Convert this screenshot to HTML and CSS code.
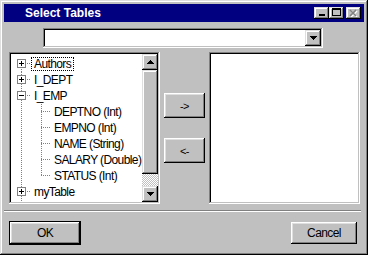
FILE: index.html
```html
<!DOCTYPE html>
<html lang="en">
<head>
    <meta charset="UTF-8">
    <title>Select Tables</title>
    <link rel="stylesheet" href="styles.css">
</head>
<body>
    <div class="window">
        <div class="title-bar">
            <span class="title">Select Tables</span>
            <div class="caption-buttons">
                <button class="cap-btn min"><span></span></button>
                <button class="cap-btn max"><span></span></button>
                <button class="cap-btn close" disabled>
                    <svg width="9" height="8" viewBox="0 0 9 8">
                        <path d="M1 1l6 6M7 1l-6 6" stroke="#fff" stroke-width="1.6" transform="translate(1 1)"/>
                        <path d="M1 1l6 6M7 1l-6 6" stroke="#808080" stroke-width="1.6"/>
                    </svg>
                </button>
            </div>
        </div>

        <div class="combo">
            <div class="combo-btn">
                <svg width="7" height="4" viewBox="0 0 7 4"><path d="M0 0h7v1h-1v1h-1v1h-1v1h-1v-1h-1v-1h-1v-1h-1z"/></svg>
            </div>
        </div>

        <div class="main">
            <div class="tree">
                <div class="tree-rows">
                    <div class="node">
                        <span class="gutter first"><span class="expander plus"></span></span>
                        <span class="label focused">Authors</span>
                    </div>
                    <div class="node">
                        <span class="gutter tee"><span class="expander plus"></span></span>
                        <span class="label">I_DEPT</span>
                    </div>
                    <div class="node">
                        <span class="gutter tee"><span class="expander minus"></span></span>
                        <span class="label">I_EMP</span>
                    </div>
                    <div class="node">
                        <span class="gutter pass"></span>
                        <span class="gutter tee"></span>
                        <span class="label">DEPTNO (Int)</span>
                    </div>
                    <div class="node">
                        <span class="gutter pass"></span>
                        <span class="gutter tee"></span>
                        <span class="label">EMPNO (Int)</span>
                    </div>
                    <div class="node">
                        <span class="gutter pass"></span>
                        <span class="gutter tee"></span>
                        <span class="label">NAME (String)</span>
                    </div>
                    <div class="node">
                        <span class="gutter pass"></span>
                        <span class="gutter tee"></span>
                        <span class="label">SALARY (Double)</span>
                    </div>
                    <div class="node">
                        <span class="gutter pass"></span>
                        <span class="gutter end"></span>
                        <span class="label">STATUS (Int)</span>
                    </div>
                    <div class="node">
                        <span class="gutter tee"><span class="expander plus"></span></span>
                        <span class="label">myTable</span>
                    </div>
                    <div class="node">
                        <span class="gutter pass"></span>
                    </div>
                </div>
                <div class="scrollbar">
                    <div class="sb-btn">
                        <svg width="7" height="4" viewBox="0 0 7 4"><path d="M3 0h1v1h1v1h1v1h1v1h-7v-1h1v-1h1v-1h1z"/></svg>
                    </div>
                    <div class="sb-thumb"></div>
                    <div class="sb-track"></div>
                    <div class="sb-btn">
                        <svg width="7" height="4" viewBox="0 0 7 4"><path d="M0 0h7v1h-1v1h-1v1h-1v1h-1v-1h-1v-1h-1v-1h-1z"/></svg>
                    </div>
                </div>
            </div>

            <div class="move-buttons">
                <button class="btn move">-&gt;</button>
                <button class="btn move">&lt;-</button>
            </div>

            <div class="list"></div>
        </div>

        <div class="separator"></div>

        <div class="footer">
            <button class="btn default">OK</button>
            <button class="btn cancel">Cancel</button>
        </div>
    </div>
</body>
</html>
```

FILE: styles.css
```css
body {
    margin: 0;
    background: #c0c0c0;
    font-family: "Liberation Sans", Arial, sans-serif;
    font-size: 12px;
    color: #000000;
}
.window {
    width: 368px;
    height: 255px;
    box-sizing: border-box;
    padding: 4px;
    background: #c0c0c0;
    box-shadow: inset -1px -1px #000000, inset 1px 1px #dfdfdf, inset -2px -2px #808080, inset 2px 2px #ffffff;
}
.title-bar {
    height: 18px;
    background: #000080;
    display: flex;
    align-items: center;
    justify-content: space-between;
    padding: 0 3px 0 21px;
}
.title {
    color: #ffffff;
    font-weight: bold;
    font-size: 12px;
    line-height: 18px;
}
.caption-buttons {
    display: flex;
}
.cap-btn {
    width: 15px;
    height: 12px;
    padding: 0;
    border: none;
    background: #c0c0c0;
    box-shadow: inset -1px -1px #000000, inset 1px 1px #dfdfdf, inset -2px -2px #808080, inset 2px 2px #ffffff;
    display: flex;
    justify-content: center;
    align-items: flex-start;
}
.cap-btn.min span {
    width: 6px;
    height: 2px;
    margin-top: 7px;
    background: #000000;
}
.cap-btn.max span {
    width: 9px;
    height: 8px;
    margin-top: 1px;
    box-sizing: border-box;
    border: 1px solid #000000;
    border-top-width: 2px;
}
.cap-btn.close {
    margin-left: 2px;
    align-items: center;
}
.cap-btn.close svg {
    display: block;
}
.combo {
    margin: 6px 0 0 39px;
    width: 280px;
    height: 20px;
    box-sizing: border-box;
    padding: 2px;
    background: #ffffff;
    box-shadow: inset -1px -1px #ffffff, inset 1px 1px #808080, inset -2px -2px #c0c0c0, inset 2px 2px #000000;
    display: flex;
    justify-content: flex-end;
}
.combo-btn,
.sb-btn,
.sb-thumb {
    background: #c0c0c0;
    box-shadow: inset -1px -1px #000000, inset 1px 1px #dfdfdf, inset -2px -2px #808080, inset 2px 2px #ffffff;
}
.combo-btn,
.sb-btn {
    width: 16px;
    height: 16px;
    flex: none;
    display: flex;
    justify-content: center;
    align-items: center;
}
.combo-btn svg,
.sb-btn svg {
    display: block;
}
.main {
    display: flex;
    height: 152px;
    margin: 4px 0 0 5px;
}
.tree,
.list {
    width: 151px;
    box-sizing: border-box;
    padding: 2px;
    background: #ffffff;
    box-shadow: inset -1px -1px #ffffff, inset 1px 1px #808080, inset -2px -2px #c0c0c0, inset 2px 2px #000000;
}
.tree {
    display: flex;
}
.tree-rows {
    flex: 1;
    min-width: 0;
    padding-top: 2px;
    overflow: hidden;
}
.node {
    display: flex;
    height: 16px;
    white-space: nowrap;
}
.gutter {
    flex: none;
    width: 20px;
    height: 16px;
    background-repeat: no-repeat;
}
.gutter.pass {
    background-image: repeating-linear-gradient(#808080 0 1px, transparent 1px 2px);
    background-size: 1px 16px;
    background-position: 10px 0;
}
.gutter.tee {
    background-image: repeating-linear-gradient(#808080 0 1px, transparent 1px 2px), repeating-linear-gradient(90deg, #808080 0 1px, transparent 1px 2px);
    background-size: 1px 16px, 10px 1px;
    background-position: 10px 0, 10px 7px;
}
.gutter.first {
    background-image: repeating-linear-gradient(#808080 0 1px, transparent 1px 2px), repeating-linear-gradient(90deg, #808080 0 1px, transparent 1px 2px);
    background-size: 1px 9px, 10px 1px;
    background-position: 10px 7px, 10px 7px;
}
.gutter.end {
    background-image: repeating-linear-gradient(#808080 0 1px, transparent 1px 2px), repeating-linear-gradient(90deg, #808080 0 1px, transparent 1px 2px);
    background-size: 1px 8px, 10px 1px;
    background-position: 10px 0, 10px 7px;
}
.expander {
    display: block;
    width: 9px;
    height: 9px;
    box-sizing: border-box;
    margin: 3px 0 0 6px;
    border: 1px solid #808080;
    background-repeat: no-repeat;
}
.expander.plus {
    background: linear-gradient(#000000, #000000) 1px 3px / 5px 1px no-repeat, linear-gradient(#000000, #000000) 3px 1px / 1px 5px no-repeat, #ffffff;
}
.expander.minus {
    background: linear-gradient(#000000, #000000) 1px 3px / 5px 1px no-repeat, #ffffff;
}
.label {
    margin-top: 1px;
    height: 14px;
    box-sizing: border-box;
    border: 1px solid transparent;
    padding: 0 2px;
    line-height: 12px;
    letter-spacing: -0.6px;
}
.label.focused {
    border: 1px dotted #000000;
}
.scrollbar {
    width: 16px;
    flex: none;
    display: flex;
    flex-direction: column;
}
.sb-thumb {
    height: 104px;
}
.sb-track {
    height: 12px;
    background: repeating-conic-gradient(#c0c0c0 0 25%, #ffffff 0 50%) 0 0 / 2px 2px;
}
.move-buttons {
    width: 49px;
    box-sizing: border-box;
    padding-top: 41px;
    display: flex;
    flex-direction: column;
    align-items: center;
    gap: 20px;
}
.btn {
    padding: 0;
    border: none;
    background: #c0c0c0;
    font: inherit;
    color: #000000;
    letter-spacing: -0.6px;
    box-shadow: inset -1px -1px #000000, inset 1px 1px #ffffff, inset -2px -2px #808080, inset 2px 2px #dfdfdf;
}
.btn.move {
    width: 41px;
    height: 25px;
    font-size: 11px;
}
.separator {
    margin: 6px 3px 0 0;
    border-top: 1px solid #808080;
    border-bottom: 1px solid #ffffff;
}
.footer {
    margin-top: 9px;
    padding: 0 7px 0 5px;
    display: flex;
    justify-content: space-between;
    align-items: center;
}
.btn.default {
    width: 72px;
    height: 24px;
    box-sizing: border-box;
    border: 1px solid #000000;
}
.btn.cancel {
    width: 66px;
    height: 22px;
}
```
